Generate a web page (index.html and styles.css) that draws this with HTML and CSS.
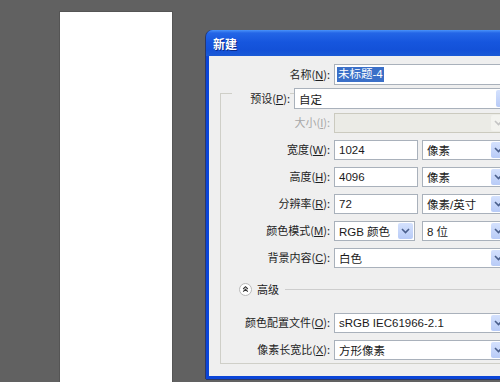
FILE: index.html
```html
<!DOCTYPE html>
<html>
<head>
<meta charset="utf-8">
<link rel="stylesheet" href="styles.css">
</head>
<body>
<div class="workspace">
  <div class="canvas"></div>
  <div class="dialog">
    <div class="titlebar">新建</div>
    <div class="body">
      <div class="row">
        <label class="lab lab-top">名称(<u>N</u>):</label>
        <div class="field name"><span class="sel">未标题-4</span></div>
      </div>
      <div class="group">
        <div class="row preset">
          <label class="lab lab-preset">预设(<u>P</u>):</label>
          <div class="field combo presetbox">自定<span class="arrow"></span></div>
        </div>
        <div class="row r1">
          <label class="lab lab-in dis">大小(<u>I</u>):</label>
          <div class="field combo wide disabled"><span class="arrow dis-arrow"><svg width="9" height="6" viewBox="0 0 9 6"><polyline points="1,1 4.5,4.5 8,1" fill="none" stroke="#c4c4c4" stroke-width="1.6"/></svg></span></div>
        </div>
        <div class="row r">
          <label class="lab lab-in">宽度(<u>W</u>):</label>
          <div class="field num">1024</div>
          <div class="field combo unit">像素<span class="arrow"><svg width="9" height="6" viewBox="0 0 9 6"><polyline points="1,1 4.5,4.5 8,1" fill="none" stroke="#4a5f8c" stroke-width="1.6"/></svg></span></div>
        </div>
        <div class="row r">
          <label class="lab lab-in">高度(<u>H</u>):</label>
          <div class="field num">4096</div>
          <div class="field combo unit">像素<span class="arrow"><svg width="9" height="6" viewBox="0 0 9 6"><polyline points="1,1 4.5,4.5 8,1" fill="none" stroke="#4a5f8c" stroke-width="1.6"/></svg></span></div>
        </div>
        <div class="row r">
          <label class="lab lab-in">分辨率(<u>R</u>):</label>
          <div class="field num">72</div>
          <div class="field combo unit">像素/英寸<span class="arrow"><svg width="9" height="6" viewBox="0 0 9 6"><polyline points="1,1 4.5,4.5 8,1" fill="none" stroke="#4a5f8c" stroke-width="1.6"/></svg></span></div>
        </div>
        <div class="row r">
          <label class="lab lab-in">颜色模式(<u>M</u>):</label>
          <div class="field combo mode">RGB 颜色<span class="arrow"><svg width="9" height="6" viewBox="0 0 9 6"><polyline points="1,1 4.5,4.5 8,1" fill="none" stroke="#4a5f8c" stroke-width="1.6"/></svg></span></div>
          <div class="field combo unit">8 位<span class="arrow"><svg width="9" height="6" viewBox="0 0 9 6"><polyline points="1,1 4.5,4.5 8,1" fill="none" stroke="#4a5f8c" stroke-width="1.6"/></svg></span></div>
        </div>
        <div class="row r">
          <label class="lab lab-in">背景内容(<u>C</u>):</label>
          <div class="field combo wide">白色<span class="arrow"><svg width="9" height="6" viewBox="0 0 9 6"><polyline points="1,1 4.5,4.5 8,1" fill="none" stroke="#4a5f8c" stroke-width="1.6"/></svg></span></div>
        </div>
        <div class="adv">
          <span class="toggle"><svg width="12" height="12" viewBox="0 0 12 12"><polyline points="3.5,6 6,3.5 8.5,6" fill="none" stroke="#333" stroke-width="1.2"/><polyline points="3.5,8.8 6,6.3 8.5,8.8" fill="none" stroke="#333" stroke-width="1.2"/></svg></span>
          <span class="advtext">高级</span>
          <span class="advline"></span>
        </div>
        <div class="row r2">
          <label class="lab lab-in">颜色配置文件(<u>O</u>):</label>
          <div class="field combo wide">sRGB IEC61966-2.1<span class="arrow"><svg width="9" height="6" viewBox="0 0 9 6"><polyline points="1,1 4.5,4.5 8,1" fill="none" stroke="#4a5f8c" stroke-width="1.6"/></svg></span></div>
        </div>
        <div class="row r">
          <label class="lab lab-in">像素长宽比(<u>X</u>):</label>
          <div class="field combo wide">方形像素<span class="arrow"><svg width="9" height="6" viewBox="0 0 9 6"><polyline points="1,1 4.5,4.5 8,1" fill="none" stroke="#4a5f8c" stroke-width="1.6"/></svg></span></div>
        </div>
      </div>
    </div>
  </div>
</div>
</body>
</html>
```
FILE: styles.css
```css
html, body {
  margin: 0;
  padding: 0;
}
body {
  width: 500px;
  height: 382px;
  overflow: hidden;
  background: #616161;
  font-family: "Liberation Sans", "Noto Sans CJK SC", sans-serif;
  font-size: 11px;
  color: #1a1a1a;
}
.workspace {
  position: relative;
  width: 500px;
  height: 382px;
  overflow: hidden;
}
.canvas {
  position: absolute;
  left: 60px;
  top: 12px;
  width: 112px;
  height: 380px;
  background: #ffffff;
  box-shadow: 0 0 0 1px #555555;
}
.dialog {
  position: absolute;
  left: 206px;
  top: 30px;
  width: 330px;
  height: 349px;
  background: #0b45d8;
  border-radius: 7px 7px 0 0;
  box-shadow: -1px 0 0 #2b3868, 0 1px 0 #2b3868;
  display: flex;
  flex-direction: column;
}
.titlebar {
  height: 26px;
  flex: none;
  display: flex;
  align-items: center;
  padding-left: 7px;
  border-radius: 7px 7px 0 0;
  background: linear-gradient(#4a93fa 0, #2466e6 3px, #1656de 12px, #1351d8 20px, #1a5ad6 26px);
  color: #ffffff;
  font-weight: bold;
  font-size: 12px;
  font-family: "Noto Sans CJK SC", sans-serif;
  text-shadow: 1px 1px 0 #0a2a8a;
}
.body {
  flex: 1;
  margin: 0 3px 3px 3px;
  background: #efefef;
  padding-top: 8px;
}
.row {
  display: flex;
  align-items: center;
  gap: 4px;
  height: 21px;
}
.lab {
  flex: none;
  text-align: right;
  white-space: nowrap;
  font-family: "Noto Sans CJK SC", sans-serif;
  font-size: 11px;
  line-height: 21px;
  color: #1e1e1e;
}
.lab u {
  font-family: "Liberation Sans", sans-serif;
}
.lab-top {
  width: 121px;
}
.lab-in {
  width: 109px;
}
.dis {
  color: #a7a7a7;
}
.field {
  box-sizing: border-box;
  height: 21px;
  flex: none;
  background: #ffffff;
  border: 1px solid #a9b1bb;
  display: flex;
  align-items: center;
  padding-left: 4px;
  position: relative;
  font-family: "Liberation Sans", "Noto Sans CJK SC", sans-serif;
  font-size: 11.5px;
  color: #1a1a1a;
}
.name {
  width: 200px;
  padding-left: 2px;
}
.sel {
  background: #3a6fc8;
  color: #ffffff;
  padding: 0 1px;
  line-height: 15px;
}
.group {
  margin: 8px 0 0 11px;
  border: 1px solid #cfcfc8;
  width: 330px;
  padding-bottom: 3px;
}
.preset {
  margin-top: -6px;
  padding-left: 11px;
}
.lab-preset {
  width: 58px;
  background: #efefef;
}
.presetbox {
  width: 219px;
}
.combo .arrow {
  position: absolute;
  right: 1px;
  top: 1px;
  bottom: 1px;
  width: 15px;
  border-radius: 2px;
  background: linear-gradient(#d4e1fd, #b8cbf7);
  display: flex;
  align-items: center;
  justify-content: center;
}
.combo .dis-arrow {
  background: #f3f3ef;
}
.r1 {
  margin-top: 4px;
  height: 20px;
}
.r {
  margin-top: 7px;
  height: 20px;
}
.r .field, .r1 .field, .r2 .field {
  height: 20px;
}
.wide {
  width: 174px;
}
.disabled {
  background: #ebebe6;
  border-color: #cbcabf;
}
.num {
  width: 84px;
}
.unit {
  width: 86px;
}
.mode {
  width: 81px;
  margin-right: 3px;
}
.adv {
  display: flex;
  align-items: center;
  height: 14px;
  margin-top: 14px;
  padding-left: 18px;
}
.toggle {
  box-sizing: border-box;
  width: 13px;
  height: 13px;
  border-radius: 50%;
  background: #ffffff;
  border: 1px solid #b9b9b9;
  display: flex;
  align-items: center;
  justify-content: center;
}
.advtext {
  margin-left: 5px;
  font-family: "Noto Sans CJK SC", sans-serif;
  font-size: 11px;
}
.advline {
  flex: 1;
  margin-left: 6px;
  border-top: 1px solid #cdcdcd;
}
.r2 {
  margin-top: 17px;
  height: 20px;
}
```
